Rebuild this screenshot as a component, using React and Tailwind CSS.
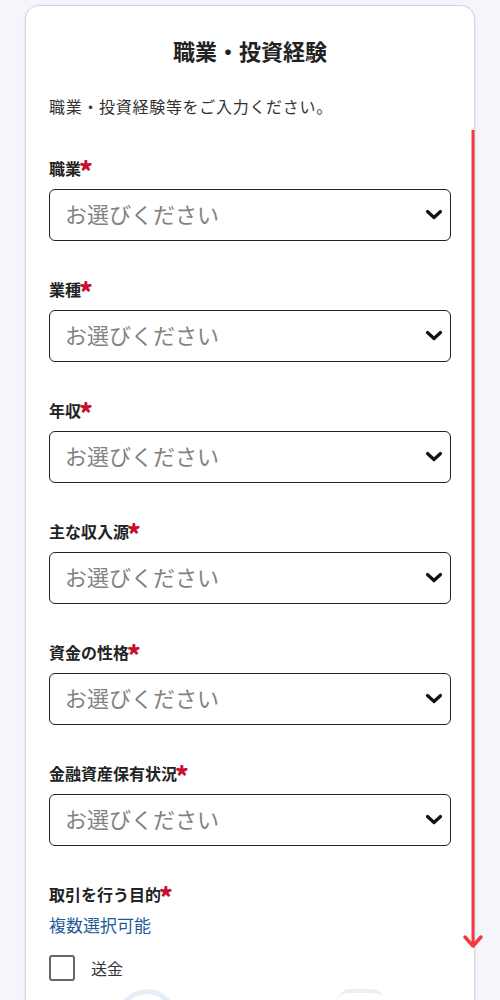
import React from 'react';

const fields = ['職業', '業種', '年収', '主な収入源', '資金の性格', '金融資産保有状況'];

const font = { fontFamily: '"Noto Sans CJK JP", "Noto Sans", sans-serif' };

function Required() {
  return <span className="-ml-[2px] text-[26px] font-black leading-none text-[#c8102e] relative top-[1px]">*</span>;
}

function Label({ children }) {
  return (
    <div className="flex items-start h-6 text-[16px] leading-6 font-bold text-[#222]">
      <span>{children}</span>
      <Required />
    </div>
  );
}

function Chevron() {
  return (
    <svg width="18" height="12" viewBox="0 0 18 12" fill="none">
      <polyline points="2.5,2.5 9,8.5 15.5,2.5" stroke="#111" strokeWidth="3.2" strokeLinecap="round" strokeLinejoin="round" />
    </svg>
  );
}

function SelectBox() {
  return (
    <div className="mt-[9px] h-[52px] flex items-center justify-between pl-[15px] pr-[7px] rounded-[6px] border-[1.5px] border-[#222] bg-white">
      <span className="text-[22px] leading-[30px] pb-[4px] text-[#828282]">お選びください</span>
      <Chevron />
    </div>
  );
}

export default function App() {
  return (
    <div className="relative w-[500px] h-[1000px] overflow-hidden bg-[#f4f6fb]" style={font}>
      <div className="mx-[25px] mt-[5px] rounded-t-[14px] border-[1.5px] border-[#d3d6db] bg-white px-[23px] pt-[29px] pb-10 shadow-sm">
        <h1 className="text-center text-[22px] leading-[30px] font-bold text-[#222]">職業・投資経験</h1>
        <p className="mt-[29px] text-[16px] leading-6 tracking-[0.7px] text-[#333]">職業・投資経験等をご入力ください。</p>

        <div className="mt-[38px] flex flex-col gap-9">
          {fields.map((f) => (
            <div key={f}>
              <Label>{f}</Label>
              <SelectBox />
            </div>
          ))}

          <div>
            <Label>取引を行う目的</Label>
            <p className="mt-[7px] text-[17px] leading-6 text-[#1f5b98]">複数選択可能</p>
            <label className="mt-[18px] flex items-center gap-4">
              <span className="w-[26px] h-[26px] rounded-[3px] border-[2.5px] border-[#666] bg-white" />
              <span className="text-[16px] text-[#333]">送金</span>
            </label>
            <div className="mt-[8px] flex justify-between px-[68px]">
              <span className="w-[60px] h-[60px] rounded-full border-[5px] border-[#e6eef8]" />
              <span className="w-[44px] h-[60px] rounded-t-[10px] border-t-[4px] border-[#eceef1]" />
            </div>
          </div>
        </div>
      </div>

      {/* scroll hint arrow drawn over the card edge */}
      <svg className="absolute left-[462px] top-[128px]" width="24" height="824" viewBox="0 0 24 824" fill="none">
        <line x1="11" y1="2" x2="11" y2="818" stroke="#f23b3b" strokeWidth="3" />
        <polyline points="3,809 11,818 19,809" stroke="#f23b3b" strokeWidth="3.5" strokeLinecap="round" strokeLinejoin="round" />
      </svg>
    </div>
  );
}
